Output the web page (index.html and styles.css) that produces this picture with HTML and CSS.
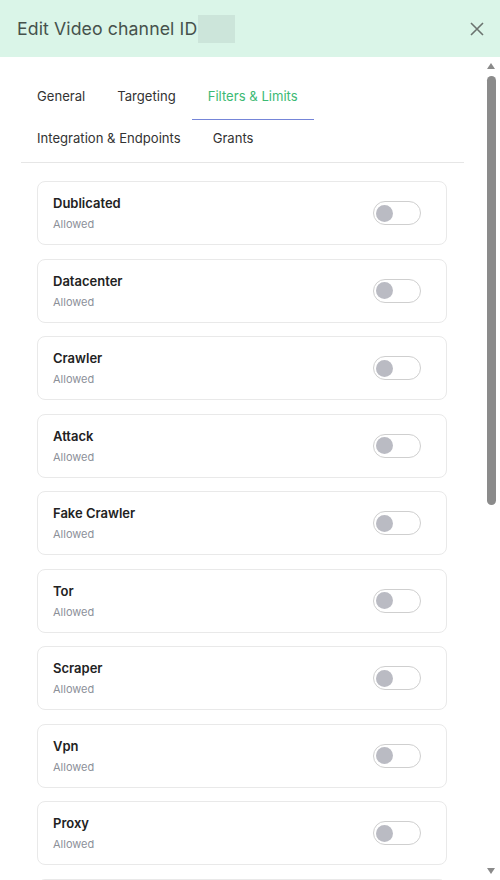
FILE: index.html
```html
<!DOCTYPE html>
<html>
<head>
<title>Edit Video channel</title>
<link rel="stylesheet" href="styles.css">
</head>
<body>
  <div class="modal">
    <div class="modal-header">
      <h2 class="modal-title">Edit Video channel ID<span class="redacted"></span></h2>
      <button class="close-btn" aria-label="Close">
        <svg width="16" height="16" viewBox="0 0 16 16"><path d="M2 2 L14 14 M14 2 L2 14" stroke="#6b736f" stroke-width="1.6" fill="none"/></svg>
      </button>
    </div>

    <div class="modal-body">
      <div class="scroll-area">
        <div class="tabs">
          <div class="tab">General</div>
          <div class="tab">Targeting</div>
          <div class="tab active">Filters &amp; Limits</div>
          <div class="tab">Integration &amp; Endpoints</div>
          <div class="tab">Grants</div>
        </div>

        <div class="filter-list" id="filterList"></div>
      </div>

      <div class="scrollbar">
        <div class="arrow up"></div>
        <div class="thumb"></div>
        <div class="arrow down"></div>
      </div>
    </div>
  </div>

<script>
  const filters = ['Dublicated', 'Datacenter', 'Crawler', 'Attack', 'Fake Crawler', 'Tor', 'Scraper', 'Vpn', 'Proxy'];
  const list = document.getElementById('filterList');

  filters.forEach(name => {
    const card = document.createElement('div');
    card.className = 'filter-card';
    card.innerHTML = `
      <div class="filter-text">
        <div class="filter-name">${name}</div>
        <div class="filter-state">Allowed</div>
      </div>
      <div class="toggle"><span class="knob"></span></div>`;
    list.appendChild(card);
  });

  // next card only peeks in below the fold
  const more = document.createElement('div');
  more.className = 'filter-card';
  list.appendChild(more);
</script>
</body>
</html>
```

FILE: styles.css
```css
body {
  margin: 0;
  font-family: Inter, "Noto Sans", sans-serif;
  background-color: #fff;
  color: #222;
}

.modal {
  width: 500px;
  height: 880px;
  display: flex;
  flex-direction: column;
  overflow: hidden;
  background-color: #fff;
}

/* Header */
.modal-header {
  height: 57px;
  flex-shrink: 0;
  background-color: #daf5e8;
  display: flex;
  align-items: center;
  justify-content: space-between;
  padding: 0 15px 0 17px;
  box-sizing: border-box;
}

.modal-title {
  margin: 0;
  font-size: 17.7px;
  font-weight: 400;
  color: #46524c;
  display: flex;
  align-items: center;
  letter-spacing: 0.1px;
}

.redacted {
  display: inline-block;
  width: 37px;
  height: 28px;
  background-color: #cce5da;
  margin-left: 1px;
}

.close-btn {
  border: none;
  background: none;
  padding: 0;
  width: 16px;
  height: 16px;
  cursor: pointer;
}

/* Body */
.modal-body {
  flex: 1;
  display: flex;
  min-height: 0;
}

.scroll-area {
  flex: 1;
  overflow: hidden;
  padding: 21px 22px 0 21px;
}

/* Tabs */
.tabs {
  display: flex;
  flex-wrap: wrap;
  border-bottom: 1px solid #e6e6e6;
}

.tab {
  padding: 9px 16px 14px;
  font-size: 13.1px;
  line-height: 18px;
  color: #333;
  border-bottom: 1px solid transparent;
  cursor: pointer;
}

.tab.active {
  color: #3cba74;
  border-bottom-color: #7585d8;
}

/* Filter cards */
.filter-list {
  padding: 18px 17px 0 16px;
}

.filter-card {
  height: 64px;
  flex-shrink: 0;
  box-sizing: border-box;
  border: 1px solid #e9e9e9;
  border-radius: 8px;
  display: flex;
  align-items: center;
  justify-content: space-between;
  padding: 0 25px 0 15px;
  margin-bottom: 13.5px;
}

.filter-name {
  font-size: 13px;
  font-weight: 600;
  line-height: 18px;
  color: #222;
}

.filter-state {
  font-size: 11px;
  line-height: 16px;
  color: #8c9099;
  margin-top: 4px;
}

.toggle {
  width: 48px;
  height: 24px;
  box-sizing: border-box;
  border: 1px solid #cfcfcf;
  border-radius: 12px;
  background-color: #fff;
  display: flex;
  align-items: center;
  padding-left: 2px;
}

.knob {
  width: 17px;
  height: 17px;
  border-radius: 50%;
  background-color: #babbc3;
}

/* Scrollbar */
.scrollbar {
  width: 14px;
  flex-shrink: 0;
  display: flex;
  flex-direction: column;
  align-items: flex-start;
  padding: 6px 0 6px 1px;
  box-sizing: border-box;
}

.arrow {
  width: 0;
  height: 0;
  border-left: 4.5px solid transparent;
  border-right: 4.5px solid transparent;
}

.arrow.up {
  border-bottom: 6px solid #8a8a8a;
}

.arrow.down {
  margin-top: auto;
  border-top: 6px solid #8a8a8a;
}

.thumb {
  width: 9px;
  height: 429px;
  margin-top: 7px;
  border-radius: 5px;
  background-color: #8b8b8b;
}
```
